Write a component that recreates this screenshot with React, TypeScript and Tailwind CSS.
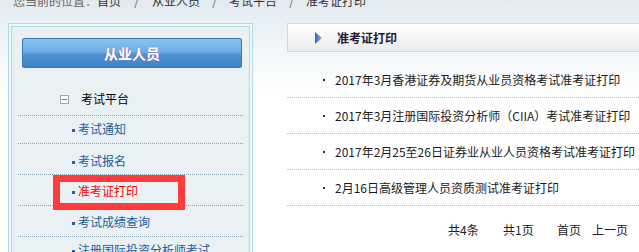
import React from "react";

const sideItems = [
	{ label: "考试通知", cls: "pt-[7px] pb-[8px]" },
	{ label: "考试报名", cls: "pt-[11px] pb-[7px]" },
	{ label: "准考证打印", cls: "pt-[10px] pb-[8px]", active: true },
	{ label: "考试成绩查询", cls: "pt-[10px] pb-[8px]" },
	{ label: "注册国际投资分析师考试", cls: "pt-[7px] pb-[8px]" }
];

const news = [
	"2017年3月香港证券及期货从业员资格考试准考证打印",
	"2017年3月注册国际投资分析师（CIIA）考试准考证打印",
	"2017年2月25至26日证券业从业人员资格考试准考证打印",
	"2月16日高级管理人员资质测试准考证打印"
];

const Breadcrumb = () => (
	<div className="-mt-[5px] h-[12px] leading-[12px] pl-[13px] flex whitespace-nowrap text-[#333]">
		<span className="text-[#666]">您当前的位置：</span>
		<span>首页</span>
		<span className="w-[31px] text-center text-[#666]">/</span>
		<span>从业人员</span>
		<span className="w-[29px] text-center text-[#666]">/</span>
		<span>考试平台</span>
		<span className="w-[29px] text-center text-[#666]">/</span>
		<span>准考证打印</span>
	</div>
);

const SideMenu = () => (
	<aside className="ml-[8px] w-[245px] shrink-0 border border-[#a9dce8] p-[2px] bg-[#f4f8fa]">
		<div className="border border-[#a9dce8] bg-[#e9f1f4] h-[260px]">
			<div className="ml-[10px] mt-[11px] w-[220px] h-[30px] rounded-[2px] border border-[#3a79b4] bg-[linear-gradient(180deg,#86c2f2_0%,#6eaee8_45%,#4f93d6_55%,#3f82c4_100%)] flex items-center justify-center">
				<span className="text-white font-bold text-[14px] leading-[14px] [text-shadow:0_0_1px_#c04090]">从业人员</span>
			</div>

			<div className="mx-[6px] border-b border-dotted border-[#8aa4b4] pt-[25px] pb-[10px] flex items-center">
				<span className="ml-[42px] w-[9px] h-[9px] border border-[#a4a4a4] bg-white flex items-center justify-center">
					<span className="w-[5px] h-px bg-[#777]" />
				</span>
				<span className="ml-[12px] leading-[12px] text-black">考试平台</span>
			</div>

			{sideItems.map((item) => (
				<div
					key={item.label}
					className={`relative mx-[6px] border-b border-dotted border-[#8aa4b4] flex items-center whitespace-nowrap ${item.cls}`}
				>
					<span className="ml-[54px] w-[3px] h-[3px] bg-[#2060a8] translate-y-[1px]" />
					<span className={`ml-[3px] leading-[12px] ${item.active ? "text-[#ff0000]" : "text-[#1d5ca0]"}`}>{item.label}</span>
					{item.active && (
						<span className="absolute top-0 left-[35px] w-[132px] h-[35px] border-[7px] border-[#ff3b3b] z-10" />
					)}
				</div>
			))}
		</div>
	</aside>
);

const ContentPanel = () => (
	<section className="ml-[34px] w-[380px] shrink-0">
		<div className="h-[29px] border border-[#d6d6d6] bg-[linear-gradient(180deg,#ffffff,#ececec)] flex items-center">
			<svg className="ml-[27px]" width="7" height="12" viewBox="0 0 7 12">
				<defs>
					<linearGradient id="tri" x1="0" y1="0" x2="1" y2="0">
						<stop offset="0" stopColor="#2f63c4" />
						<stop offset="1" stopColor="#8fb4ea" />
					</linearGradient>
				</defs>
				<polygon points="0,0 7,6 0,12" fill="url(#tri)" />
			</svg>
			<span className="ml-[15px] font-bold leading-[12px] text-[#241838]">准考证打印</span>
		</div>

		<ul className="mt-[10px]">
			{news.map((title) => (
				<li
					key={title}
					className="h-[36px] border-b border-dotted border-[#bdbdbd] flex items-center whitespace-nowrap"
				>
					<span className="ml-[36px] w-[2px] h-[2px] bg-[#333]" />
					<span className="ml-[10px] text-[#1a1a1a] leading-[12px]">{title}</span>
				</li>
			))}
		</ul>

		<div className="mt-[18px] pl-[161px] flex leading-[12px] text-[#222] whitespace-nowrap">
			<span className="w-[55px]">共4条</span>
			<span className="w-[54px]">共1页</span>
			<span className="w-[35px]">首页</span>
			<span>上一页</span>
		</div>
	</section>
);

export default function App() {
	return (
		<div className="w-[639px] h-[252px] overflow-hidden bg-[linear-gradient(180deg,#e2eaf0_0px,#f1f5f8_45px,#ffffff_95px)] text-[12px] font-['SimSun','Noto_Sans_CJK_SC',sans-serif]">
			<Breadcrumb />
			<div className="flex mt-[16px]">
				<SideMenu />
				<ContentPanel />
			</div>
		</div>
	);
}
